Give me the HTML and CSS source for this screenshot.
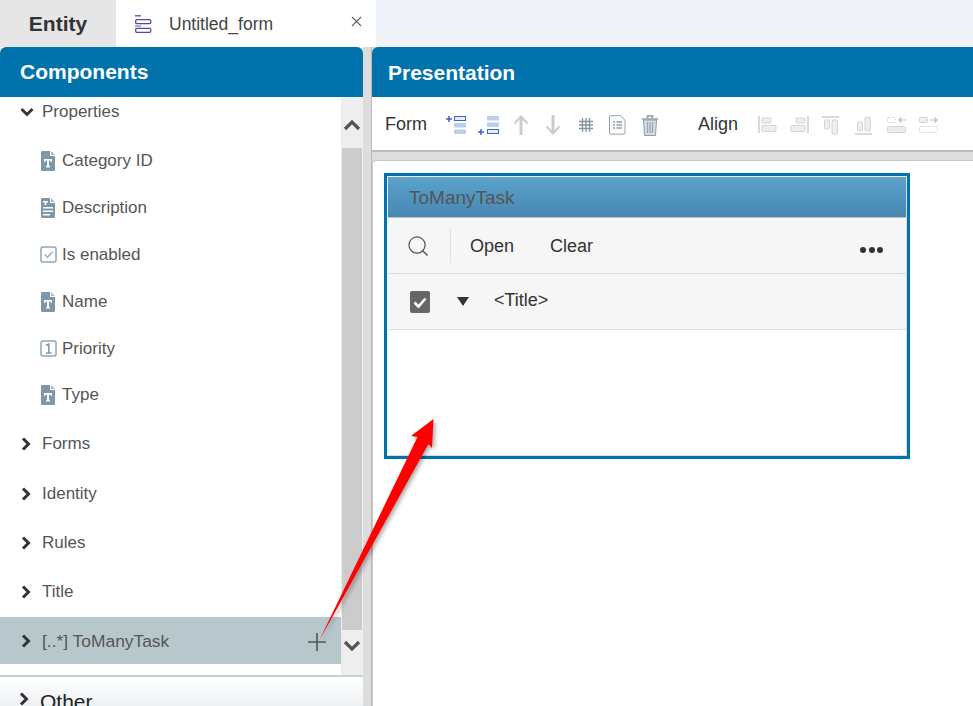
FILE: index.html
```html
<!DOCTYPE html>
<html lang="en">
<head>
<meta charset="utf-8">
<title>Untitled_form</title>
<link rel="stylesheet" href="styles.css">
</head>
<body>
<svg class="defs" width="0" height="0" aria-hidden="true">
  <defs>
    <symbol id="file-t" viewBox="0 0 14 20">
      <path fill="#7f98a8" d="M1 0h8v5h5v14a1 1 0 0 1-1 1H1a1 1 0 0 1-1-1V1a1 1 0 0 1 1-1z"/>
      <path fill="#a9bac5" d="M10 0l4 4h-4z"/>
      <path fill="#fff" d="M3 8h8v3h-1.200l-.4-1.400H8V15l1 .6V16.400H5v-.8l1-.6V9.600H4.600L4.200 11H3z"/>
    </symbol>
    <symbol id="file-lines" viewBox="0 0 14 20">
      <path fill="#7f98a8" d="M1 0h8v5h5v14a1 1 0 0 1-1 1H1a1 1 0 0 1-1-1V1a1 1 0 0 1 1-1z"/>
      <path fill="#a9bac5" d="M10 0l4 4h-4z"/>
      <path fill="#fff" d="M2 3h5v1.500H5.300V7H3.700V4.500H2zM2 9h10v1.500H2zM2 12.500h10V14H2zM2 16h7v1.500H2z"/>
    </symbol>
    <symbol id="box-check" viewBox="0 0 17 17">
      <rect x="1" y="1" width="15" height="15" rx="2" fill="#fff" stroke="#8fa6b4" stroke-width="1.500"/>
      <path d="M4.500 8.500l3 2.800 5-5.300" fill="none" stroke="#9db0bd" stroke-width="1.500"/>
    </symbol>
    <symbol id="box-one" viewBox="0 0 17 17">
      <rect x="1" y="1" width="15" height="15" rx="2" fill="#fff" stroke="#8fa6b4" stroke-width="1.500"/>
      <path d="M6 5.500l2.800-1.500v9M6 13h5.500" fill="none" stroke="#7f98a8" stroke-width="1.500"/>
    </symbol>
    <symbol id="chev-right" viewBox="0 0 10 14">
      <path d="M2 1.500L7.500 7 2 12.500" fill="none" stroke="#333" stroke-width="3"/>
    </symbol>
    <symbol id="chev-down" viewBox="0 0 14 10">
      <path d="M1.500 2L7 7.500 12.500 2" fill="none" stroke="#333" stroke-width="2.800"/>
    </symbol>
  </defs>
</svg>

<header class="tabs">
  <div class="tab-entity">Entity</div>
  <div class="tab-form">
    <svg class="tab-icon" viewBox="0 0 17 18" width="17" height="18">
      <path d="M0 .8h6" stroke="#5b45a8" stroke-width="1.300"/>
      <rect x=".7" y="4.700" width="15" height="4" rx="1" fill="none" stroke="#5b45a8" stroke-width="1.300"/>
      <path d="M0 11h6" stroke="#8b7cc4" stroke-width="1.300"/>
      <rect x=".7" y="13.300" width="15" height="4" rx="1" fill="none" stroke="#5b45a8" stroke-width="1.300"/>
    </svg>
    <span class="tab-label">Untitled_form</span>
    <svg class="tab-close" viewBox="0 0 11 11" width="11" height="11">
      <path d="M1 1l9 9M10 1l-9 9" stroke="#666" stroke-width="1.200"/>
    </svg>
  </div>
  <div class="tab-rest"></div>
</header>

<main class="workspace">
  <aside class="left">
    <h2 class="panel-title left-title">Components</h2>
    <div class="tree-wrap">
      <ul class="tree">
        <li class="row row-open"><svg class="chev-d"><use href="#chev-down"/></svg>Properties</li>
        <li class="row child"><svg class="ico"><use href="#file-t"/></svg>Category ID</li>
        <li class="row child"><svg class="ico"><use href="#file-lines"/></svg>Description</li>
        <li class="row child"><svg class="ico-box"><use href="#box-check"/></svg>Is enabled</li>
        <li class="row child"><svg class="ico"><use href="#file-t"/></svg>Name</li>
        <li class="row child"><svg class="ico-box"><use href="#box-one"/></svg>Priority</li>
        <li class="row child last-child"><svg class="ico"><use href="#file-t"/></svg>Type</li>
        <li class="row top"><svg class="chev-r"><use href="#chev-right"/></svg>Forms</li>
        <li class="row top"><svg class="chev-r"><use href="#chev-right"/></svg>Identity</li>
        <li class="row top"><svg class="chev-r"><use href="#chev-right"/></svg>Rules</li>
        <li class="row top"><svg class="chev-r"><use href="#chev-right"/></svg>Title</li>
        <li class="row selected"><svg class="chev-r"><use href="#chev-right"/></svg><span class="grow">[..*] ToManyTask</span>
          <svg class="plus" viewBox="0 0 18 18" width="18" height="18"><path d="M9 0v18M0 9h18" stroke="#555" stroke-width="1.600"/></svg>
        </li>
      </ul>
      <div class="scrollbar">
        <div class="scroll-btn scroll-up"><svg viewBox="0 0 18 12" width="18" height="12"><path d="M2 10l7-7 7 7" fill="none" stroke="#555" stroke-width="3.200"/></svg></div>
        <div class="scroll-thumb"></div>
        <div class="scroll-btn scroll-down"><svg viewBox="0 0 18 12" width="18" height="12"><path d="M2 2l7 7 7-7" fill="none" stroke="#555" stroke-width="3.200"/></svg></div>
      </div>
    </div>
    <div class="other"><svg class="chev-o"><use href="#chev-right"/></svg>Other</div>
  </aside>

  <div class="gutter"></div>

  <section class="right">
    <h2 class="panel-title right-title">Presentation</h2>
    <div class="toolbar">
      <span class="tool-label">Form</span>
      <div class="tool-icons form-icons">
        <svg viewBox="0 0 22 20" width="22" height="20"><path d="M0 4h6M3 1v6" stroke="#3f62c8" stroke-width="1.500"/><rect x="8.500" y="1.500" width="11" height="4" fill="#eaf0fb" stroke="#3f62c8"/><rect x="8" y="8" width="12" height="4.500" fill="#bcd0ea"/><rect x="8" y="14.500" width="12" height="4.500" fill="#bcd0ea"/></svg>
        <svg viewBox="0 0 22 20" width="22" height="20"><rect x="9" y="1" width="12" height="4.500" fill="#bcd0ea"/><rect x="9" y="7.500" width="12" height="4.500" fill="#bcd0ea"/><path d="M0 17h6M3 14v6" stroke="#3f62c8" stroke-width="1.500"/><rect x="9.500" y="14.500" width="11" height="4" fill="#eaf0fb" stroke="#3f62c8"/></svg>
        <svg viewBox="0 0 14 20" width="14" height="20"><path d="M7 20V3" stroke="#ccc" stroke-width="3"/><path d="M.5 8.500L7 1.500l6.500 7" fill="none" stroke="#ccc" stroke-width="2"/></svg>
        <svg viewBox="0 0 14 20" width="14" height="20"><path d="M7 0v17" stroke="#ccc" stroke-width="3"/><path d="M.5 11.500L7 18.500l6.500-7" fill="none" stroke="#ccc" stroke-width="2"/></svg>
        <svg viewBox="0 0 16 16" width="16" height="16"><path d="M4.500 1v14M8 1v14M11.500 1v14M1 4.500h14M1 8h14M1 11.500h14" stroke="#8295a3" stroke-width="1.300"/></svg>
        <svg viewBox="0 0 17 20" width="17" height="20"><path d="M1.500.7h10l4.500 4.500v13a1 1 0 0 1-1 1H1.500a1 1 0 0 1-1-1V1.700a1 1 0 0 1 1-1z" fill="#fbfbfb" stroke="#99a5ae"/><path d="M4 7h2M7.500 7H13M4 10h2M7.500 10H13M4 13h2M7.500 13H13" stroke="#5b7080" stroke-width="1.200"/></svg>
        <svg viewBox="0 0 18 21" width="18" height="21"><path d="M1 4h16M6.500 3V1h5v2" fill="none" stroke="#8f9da8" stroke-width="1.600"/><path d="M2.500 5h13l-1 15.500h-11z" fill="#d6dde2" stroke="#8f9da8"/><path d="M6.500 7v11M9 7v11M11.500 7v11" stroke="#9aa7b1" stroke-width="1.300"/></svg>
      </div>
      <span class="tool-label align-label">Align</span>
      <div class="tool-icons align-icons">
        <svg viewBox="0 0 19 18" width="19" height="18"><path d="M1 0v17" stroke="#ccc" stroke-width="1.500"/><rect x="4" y="2" width="9" height="5" rx="1" fill="#eee" stroke="#d4d4d4"/><rect x="4" y="9.500" width="14" height="6" rx="1" fill="#eee" stroke="#d4d4d4"/></svg>
        <svg viewBox="0 0 19 18" width="19" height="18"><path d="M18 0v17" stroke="#ccc" stroke-width="1.500"/><rect x="6" y="2" width="9" height="5" rx="1" fill="#eee" stroke="#d4d4d4"/><rect x="1" y="9.500" width="14" height="6" rx="1" fill="#eee" stroke="#d4d4d4"/></svg>
        <svg viewBox="0 0 18 19" width="18" height="19"><path d="M0 1h17" stroke="#ccc" stroke-width="1.500"/><rect x="2.500" y="4" width="5" height="9" rx="1" fill="#eee" stroke="#d4d4d4"/><rect x="10" y="4" width="5.500" height="14" rx="1" fill="#eee" stroke="#d4d4d4"/></svg>
        <svg viewBox="0 0 18 19" width="18" height="19"><path d="M0 18h17" stroke="#ccc" stroke-width="1.500"/><rect x="2.500" y="6" width="5" height="9" rx="1" fill="#eee" stroke="#d4d4d4"/><rect x="10" y="1" width="5.500" height="14" rx="1" fill="#eee" stroke="#d4d4d4"/></svg>
        <svg viewBox="0 0 20 18" width="20" height="18"><rect x=".5" y="1.500" width="8" height="5" rx="1" fill="none" stroke="#d4d4d4" stroke-dasharray="1.500 1"/><path d="M19 4h-7M14.500 1.500L12 4l2.500 2.500" fill="none" stroke="#bbb" stroke-width="1.200"/><rect x=".5" y="10.500" width="18" height="6" rx="1" fill="#eee" stroke="#d4d4d4"/></svg>
        <svg viewBox="0 0 20 18" width="20" height="18"><rect x=".5" y="1.500" width="8" height="5" rx="1" fill="#eee" stroke="#d4d4d4"/><path d="M11 4h7M15.500 1.500L18 4l-2.500 2.500" fill="none" stroke="#bbb" stroke-width="1.200"/><rect x=".5" y="10.500" width="18" height="6" rx="1" fill="none" stroke="#d4d4d4" stroke-dasharray="1.500 1"/></svg>
      </div>
    </div>
    <div class="toolbar-gap"></div>
    <div class="canvas">
      <div class="widget">
        <div class="widget-inner">
          <div class="widget-head">ToManyTask</div>
          <div class="widget-actions">
            <svg class="search" viewBox="0 0 21 21" width="20" height="20"><circle cx="9.500" cy="9.500" r="8.500" fill="none" stroke="#555" stroke-width="1.300"/><path d="M15.500 15.500l5 5" stroke="#555" stroke-width="1.600"/></svg>
            <span class="action open">Open</span>
            <span class="action clear">Clear</span>
            <span class="dots"><i></i><i></i><i></i></span>
          </div>
          <div class="widget-row">
            <svg class="check" viewBox="0 0 20 22" width="20" height="22"><rect width="20" height="22" rx="2" fill="#666"/><path d="M4.500 11.500l4 4 7-8" fill="none" stroke="#fff" stroke-width="2.600"/></svg>
            <span class="caret"></span>
            <span class="title-cell">&lt;Title&gt;</span>
          </div>
        </div>
      </div>
    </div>
  </section>
</main>

<svg class="arrow" viewBox="0 0 973 706" width="973" height="706" aria-hidden="true">
  <defs>
    <filter id="arrow-shadow" x="-30%" y="-10%" width="160%" height="120%">
      <feDropShadow dx="2" dy="2" stdDeviation="2" flood-color="#000" flood-opacity=".35"/>
    </filter>
  </defs>
  <path filter="url(#arrow-shadow)" fill="#ff0000" d="M319 641L417.500 437 411 436 433.500 419 432 448 428.500 444z"/>
</svg>
</body>
</html>
```

FILE: styles.css
```css
* { box-sizing: border-box; }

html, body {
  margin: 0;
  height: 706px;
  overflow: hidden;
}

body {
  position: relative;
  font-family: "Liberation Sans", Arial, sans-serif;
  background: #dddddd;
  color: #333;
}

.defs { position: absolute; }

/* Tabs */
.tabs {
  display: flex;
  height: 47px;
}

.tab-entity {
  width: 116px;
  background: #e6e6e6;
  font-size: 21px;
  font-weight: 700;
  line-height: 48px;
  text-align: center;
  color: #333;
}

.tab-form {
  width: 260px;
  background: #fff;
  display: flex;
  align-items: center;
  padding-left: 19px;
}

.tab-icon { flex: none; }

.tab-label {
  margin: 1px 0 0 17px;
  font-size: 17.500px;
  color: #444;
  flex: 1;
}

.tab-close { margin-right: 14px; margin-top: -5px; }

.tab-rest { flex: 1; background: #f0f3f7; }

/* Layout */
.workspace {
  display: flex;
  height: 659px;
}

.left {
  width: 363px;
  flex: none;
  display: flex;
  flex-direction: column;
  background: #fff;
}

.gutter {
  width: 9px;
  flex: none;
  background: #dddddd;
  border-right: 1px solid #b9b9b9;
}

.right {
  flex: 1;
  display: flex;
  flex-direction: column;
  min-width: 0;
}

.panel-title {
  margin: 0;
  height: 50px;
  background: #0072ac;
  color: #fff;
  font-size: 21px;
  font-weight: 700;
  line-height: 50px;
  border-radius: 6px 6px 0 0;
}

.left-title { padding-left: 20px; }
.right-title { padding-left: 16px; border-radius: 6px 0 0 0; line-height: 52px; }

/* Tree */
.tree-wrap {
  display: flex;
  height: 578px;
}

.tree {
  list-style: none;
  margin: 0;
  padding: 0;
  flex: 1;
  min-width: 0;
  font-size: 17px;
  color: #555;
}

.row {
  display: flex;
  align-items: center;
}

.row-open {
  height: 41px;
  padding: 0 0 11px 20px;
}

.child {
  height: 46.800px;
  padding-left: 41px;
}

.last-child { margin-bottom: 1px; }

.top, .selected { padding-left: 21px; }

.top { height: 49.200px; }

.selected {
  height: 47px;
  margin-top: .4px;
  padding: 2px 15px 0 21px;
  background: #b8c7cc;
}

.grow { flex: 1; font-size: 17.400px; }

.chev-d { width: 14px; height: 10px; margin-right: 8px; }
.chev-r { width: 10px; height: 14px; margin-right: 11px; }
.ico { width: 14px; height: 20px; margin-right: 7px; flex: none; }
.ico-box { width: 17px; height: 17px; margin: 0 5px 0 -1px; flex: none; }
.plus { flex: none; margin-top: 2px; }

.scrollbar {
  width: 22px;
  flex: none;
  display: flex;
  flex-direction: column;
  background: #eeeeee;
}

.scroll-btn {
  display: flex;
  justify-content: center;
  align-items: center;
}

.scroll-up { height: 51px; padding-top: 4px; }
.scroll-down { height: 45px; padding-bottom: 13px; }

.scroll-thumb {
  flex: 1;
  margin: 0 1px;
  background: #cccccc;
}

.other {
  height: 31px;
  flex: none;
  border-top: 2px solid #c5d3d8;
  background: linear-gradient(#ffffff, #eef1f4);
  display: flex;
  align-items: flex-start;
  padding: 14px 0 0 19px;
  font-size: 21px;
  line-height: 22px;
  color: #222;
}

.chev-o { width: 10px; height: 14px; margin-right: 11px; margin-top: 1px; flex: none; }

/* Toolbar */
.toolbar {
  height: 53px;
  flex: none;
  background: #fff;
  display: flex;
  align-items: center;
  padding: 2px 0 0 13px;
}

.tool-label {
  font-size: 18px;
  color: #333;
}

.tool-icons {
  display: flex;
  align-items: center;
  margin-top: 1px;
}

.form-icons { gap: 10px; margin-left: 19px; }
.form-icons svg:nth-child(3) { margin-left: 4px; }
.form-icons svg:nth-child(4) { margin-left: 8px; }
.form-icons svg:nth-child(5) { margin-left: 8px; }
.form-icons svg:nth-child(6) { margin-left: 5px; }
.form-icons svg:nth-child(7) { margin-left: 5px; }

.align-label { margin-left: 39px; }
.align-icons { gap: 13px; margin-left: 20px; }
.align-icons svg:nth-child(4) { margin-left: 2px; }
.align-icons svg:nth-child(5) { margin-left: 1px; }
.align-icons svg:nth-child(6) { margin-left: -1px; }

.toolbar-gap {
  height: 10px;
  flex: none;
  background: #dddddd;
  border-top: 2px solid #bcbcbc;
}

/* Canvas */
.canvas {
  flex: 1;
  background: #fff;
  border-top: 1px solid #c8c8c8;
  border-left: 1px solid #c8c8c8;
  border-top-left-radius: 5px;
  padding: 12px 0 0 11px;
}

.widget {
  width: 526px;
  height: 286px;
  border: 3px solid #0072ac;
}

.widget-inner {
  height: 100%;
  border: 1px solid #dcdcdc;
  border-left-color: #f2f2f2;
  border-top-color: #eeeeee;
  background: #fff;
}

.widget-head {
  height: 41px;
  background: linear-gradient(#5aa2cc, #4687b2);
  border-bottom: 1px solid #b9c6cd;
  padding-left: 21px;
  font-size: 19px;
  line-height: 41px;
  color: #555;
}

.widget-actions {
  height: 56px;
  background: #f6f6f6;
  border-bottom: 1px solid #dddddd;
  display: flex;
  align-items: center;
  padding-right: 23px;
  font-size: 18px;
  color: #333;
}

.search { margin-left: 20px; flex: none; }

.action { margin-left: 36px; }

.clear { margin-top: 1px; }

.open {
  margin-left: 22px;
  height: 34px;
  line-height: 34px;
  padding-left: 19px;
  border-left: 1px solid #e3e3e3;
}

.dots {
  margin-left: auto;
  display: flex;
  gap: 2.500px;
  padding-top: 8px;
}

.dots i {
  width: 6px;
  height: 6px;
  border-radius: 50%;
  background: #333;
}

.widget-row {
  height: 56px;
  background: #f6f6f6;
  border-bottom: 1px solid #dddddd;
  display: flex;
  align-items: center;
  font-size: 18px;
  color: #333;
}

.check { margin-left: 22px; flex: none; }

.caret {
  margin: 0 0 0 27px;
  width: 0;
  height: 0;
  border-left: 6.500px solid transparent;
  border-right: 6.500px solid transparent;
  border-top: 9px solid #333;
}

.title-cell { margin-left: 25px; margin-top: -3px; }

/* Annotation arrow */
.arrow {
  position: absolute;
  left: 0;
  top: 0;
  pointer-events: none;
}
```
